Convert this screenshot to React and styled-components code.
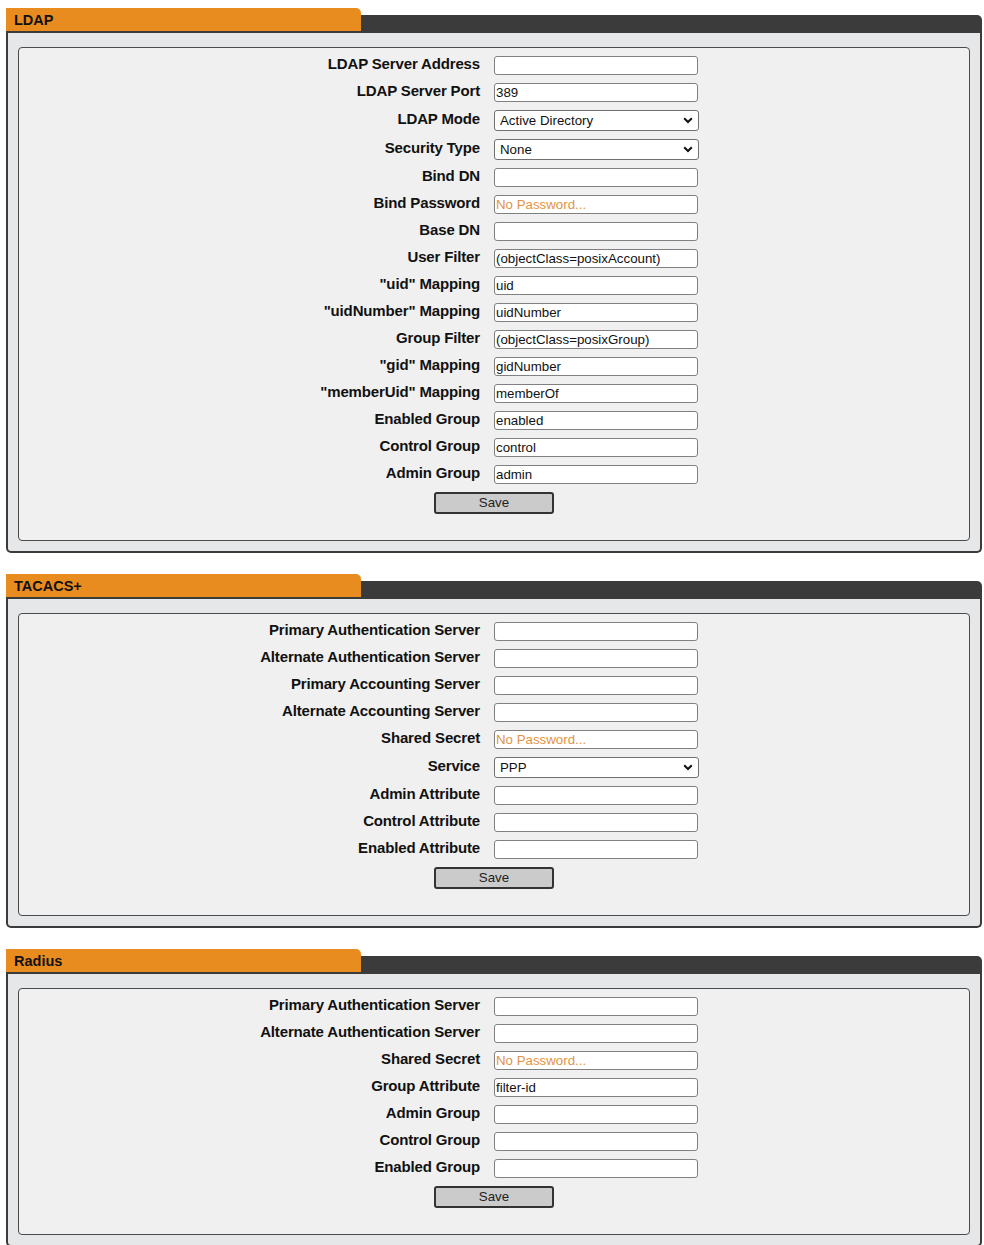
import React from "react";
import styled, { createGlobalStyle } from "styled-components";

const Global = createGlobalStyle`
  html, body { margin: 0; padding: 0; background: #ffffff; }
  body { font-family: "Liberation Sans", Arial, sans-serif; color: #111; }
`;

const Page = styled.div`
  padding: 8px 2px 0 6px;
  display: flex;
  flex-direction: column;
  gap: 21px;
`;

const Panel = styled.section`
  display: flex;
  flex-direction: column;
`;

const Header = styled.div`
  display: flex;
  align-items: flex-end;
  border-bottom: 2px solid #3b3b3c;
`;

const Tab = styled.div`
  width: 355px;
  height: 23px;
  box-sizing: border-box;
  background: #e98c1f;
  border-top-right-radius: 5px;
  padding: 4px 0 0 8px;
  font-size: 14.5px;
  line-height: 17px;
  font-weight: bold;
  color: #111;
`;

const Bar = styled.div`
  flex: 1;
  height: 16px;
  background: #3b3b3c;
  border-top-right-radius: 5px;
`;

const Body = styled.div`
  background: #e6e7e8;
  border: 2px solid #3b3b3c;
  border-top: none;
  border-radius: 0 0 5px 5px;
  padding: 14px 10px 10px 10px;
`;

const Fieldset = styled.div`
  background: #f0f0f0;
  border: 1px solid #4a4a4a;
  border-radius: 4px;
  padding: 8px 0 26px 0;
  display: flex;
  flex-direction: column;
  align-items: stretch;
  gap: 8px;
`;

const Row = styled.div`
  display: grid;
  grid-template-columns: 1fr 1fr;
  align-items: center;
`;

const Label = styled.label`
  text-align: right;
  padding: 0 14px 4px 0;
  font-size: 15px;
  line-height: 15px;
  font-weight: bold;
  color: #111;
  white-space: nowrap;
  letter-spacing: -0.15px;
`;

const Input = styled.input`
  display: block;
  box-sizing: border-box;
  width: 204px;
  height: 19px;
  border: 1px solid #808080;
  border-radius: 3px;
  background: #fff;
  padding: 0 1px;
  font-family: "Liberation Sans", Arial, sans-serif;
  font-size: 13.3px;
  color: #111;
  outline: none;
  &::placeholder { color: #e39443; opacity: 1; }
`;

const SelectWrap = styled.div`
  position: relative;
  width: 205px;
  height: 21px;
`;

const Select = styled.select`
  appearance: none;
  -webkit-appearance: none;
  display: block;
  box-sizing: border-box;
  width: 100%;
  height: 100%;
  border: 1px solid #707070;
  border-radius: 3px;
  background: #fff;
  padding: 0 0 0 5px;
  font-family: "Liberation Sans", Arial, sans-serif;
  font-size: 13.3px;
  color: #111;
  outline: none;
`;

const Chevron = styled.svg`
  position: absolute;
  right: 6px;
  top: 7px;
  pointer-events: none;
`;

const SaveRow = styled.div`
  display: flex;
  justify-content: center;
`;

const SaveButton = styled.button`
  box-sizing: border-box;
  width: 120px;
  height: 22px;
  background: #cbcbcb;
  border: 2px solid #333;
  border-radius: 3px;
  font-family: "Liberation Sans", Arial, sans-serif;
  font-size: 13.3px;
  color: #222;
  padding: 0 0 1px 0;
`;

function Field({ f }) {
  if (f.options) {
    return (
      <SelectWrap>
        <Select defaultValue={f.value}>
          {f.options.map((o) => (
            <option key={o}>{o}</option>
          ))}
        </Select>
        <Chevron width="10" height="7" viewBox="0 0 10 7">
          <path d="M1.2 1.2 L5 5 L8.8 1.2" fill="none" stroke="#111" strokeWidth="2" />
        </Chevron>
      </SelectWrap>
    );
  }
  if (f.password) {
    return <Input type="password" placeholder="No Password..." />;
  }
  return <Input type="text" defaultValue={f.value || ""} />;
}

function Section({ title, fields }) {
  return (
    <Panel>
      <Header>
        <Tab>{title}</Tab>
        <Bar />
      </Header>
      <Body>
        <Fieldset>
          {fields.map((f) => (
            <Row key={f.label}>
              <Label>{f.label}</Label>
              <div>
                <Field f={f} />
              </div>
            </Row>
          ))}
          <SaveRow>
            <SaveButton>Save</SaveButton>
          </SaveRow>
        </Fieldset>
      </Body>
    </Panel>
  );
}

const ldap = [
  { label: "LDAP Server Address" },
  { label: "LDAP Server Port", value: "389" },
  { label: "LDAP Mode", options: ["Active Directory", "OpenLDAP"], value: "Active Directory" },
  { label: "Security Type", options: ["None", "StartTLS", "SSL"], value: "None" },
  { label: "Bind DN" },
  { label: "Bind Password", password: true },
  { label: "Base DN" },
  { label: "User Filter", value: "(objectClass=posixAccount)" },
  { label: "\"uid\" Mapping", value: "uid" },
  { label: "\"uidNumber\" Mapping", value: "uidNumber" },
  { label: "Group Filter", value: "(objectClass=posixGroup)" },
  { label: "\"gid\" Mapping", value: "gidNumber" },
  { label: "\"memberUid\" Mapping", value: "memberOf" },
  { label: "Enabled Group", value: "enabled" },
  { label: "Control Group", value: "control" },
  { label: "Admin Group", value: "admin" },
];

const tacacs = [
  { label: "Primary Authentication Server" },
  { label: "Alternate Authentication Server" },
  { label: "Primary Accounting Server" },
  { label: "Alternate Accounting Server" },
  { label: "Shared Secret", password: true },
  { label: "Service", options: ["PPP", "Raccess", "Login"], value: "PPP" },
  { label: "Admin Attribute" },
  { label: "Control Attribute" },
  { label: "Enabled Attribute" },
];

const radius = [
  { label: "Primary Authentication Server" },
  { label: "Alternate Authentication Server" },
  { label: "Shared Secret", password: true },
  { label: "Group Attribute", value: "filter-id" },
  { label: "Admin Group" },
  { label: "Control Group" },
  { label: "Enabled Group" },
];

export default function App() {
  return (
    <>
      <Global />
      <Page>
        <Section title="LDAP" fields={ldap} />
        <Section title="TACACS+" fields={tacacs} />
        <Section title="Radius" fields={radius} />
      </Page>
    </>
  );
}
